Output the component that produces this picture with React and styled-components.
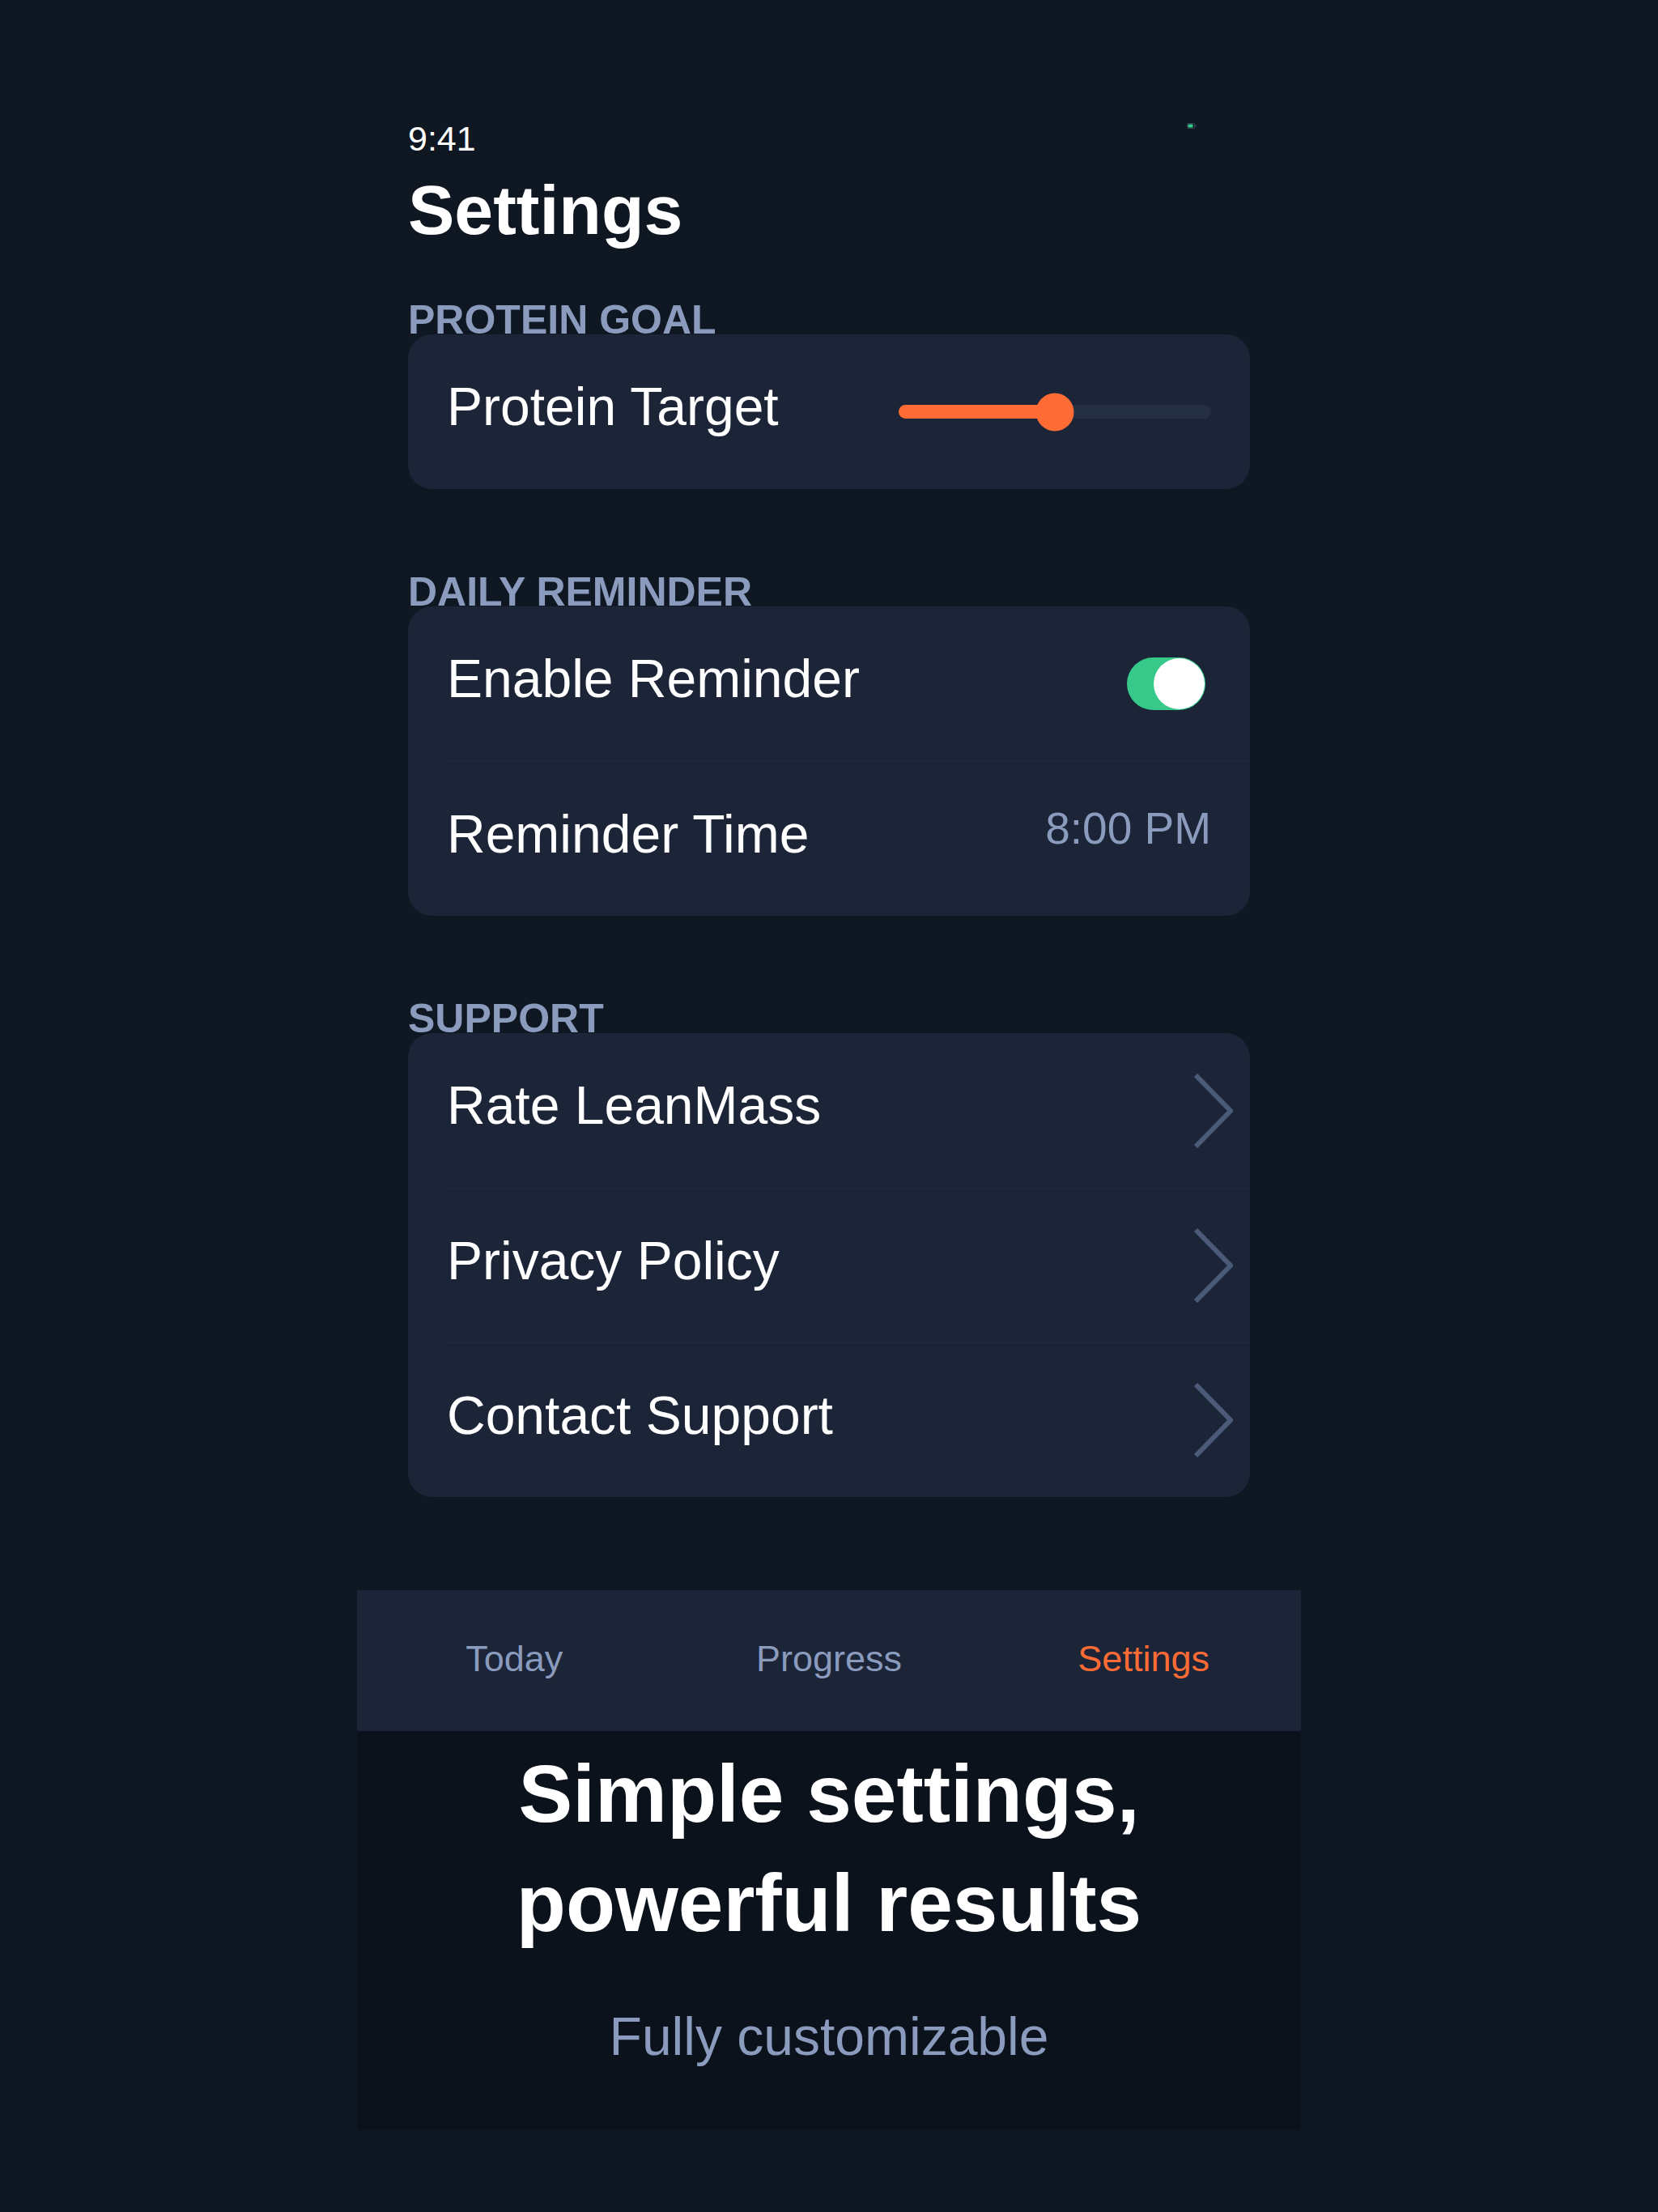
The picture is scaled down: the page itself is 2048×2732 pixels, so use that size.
import React from 'react';
import styled, {createGlobalStyle} from 'styled-components';

const GlobalStyle = createGlobalStyle`
  html, body {
    margin: 0;
    padding: 0;
    background: #0f1822;
  }
  body {
    font-family: "Liberation Sans", Arial, Helvetica, sans-serif;
    color: #ffffff;
  }
`;

const Page = styled.div`
  min-height: 2732px;
  display: flex;
  justify-content: center;
`;

const Phone = styled.div`
  width: 1166px;
  display: flex;
  flex-direction: column;
`;

const Content = styled.div`
  padding: 144px 63px 0;
  display: flex;
  flex-direction: column;
`;

const StatusBar = styled.div`
  display: flex;
  justify-content: space-between;
  height: 54px;
`;

const Time = styled.span`
  font-size: 43px;
  line-height: 54px;
  color: #ffffff;
`;

const Battery = styled.svg`
  width: 12px;
  height: 7px;
  margin: 8px 66px 0 0;
`;

const Title = styled.h1`
  margin: 11px 0 0;
  font-size: 86px;
  line-height: 100px;
  font-weight: 700;
  color: #ffffff;
`;

const SectionHeader = styled.h2`
  margin: ${p => (p.$first ? '61px' : '102px')} 0 -7px;
  font-size: 50px;
  line-height: 50px;
  font-weight: 700;
  color: #8a9bbe;
  text-transform: uppercase;
`;

const Card = styled.div`
  position: relative;
  background: #1b2537;
  border-radius: 30px;
  overflow: hidden;
`;

const Row = styled.div`
  height: 191px;
  box-sizing: border-box;
  margin-left: 48px;
  padding-right: 48px;
  display: flex;
  align-items: center;
  justify-content: space-between;

  & + & {
    border-top: 1px solid #212c3e;
  }
`;

const Label = styled.span`
  font-size: 66px;
  color: #ffffff;
  padding-bottom: 13px;
`;

const Value = styled.span`
  font-size: 55px;
  color: #8a9bbe;
  padding-bottom: 26px;
`;

const SliderTrack = styled.div`
  position: relative;
  width: 386px;
  height: 17px;
  border-radius: 9px;
  background: #252f43;
`;

const SliderFill = styled.div`
  height: 100%;
  border-radius: 9px;
  background: #ff6b35;
`;

const SliderThumb = styled.div`
  position: absolute;
  top: 50%;
  width: 47px;
  height: 47px;
  border-radius: 50%;
  background: #ff6b35;
  transform: translate(-50%, -50%);
`;

const Toggle = styled.div`
  width: 97px;
  height: 65px;
  box-sizing: border-box;
  padding: 1px;
  border-radius: 33px;
  background: ${p => (p.$on ? '#37c98a' : '#3a4558')};
  display: flex;
  justify-content: ${p => (p.$on ? 'flex-end' : 'flex-start')};
  margin-right: 7px;
`;

const Knob = styled.div`
  width: 63px;
  height: 63px;
  border-radius: 50%;
  background: #ffffff;
`;

const Chevron = styled.svg`
  width: 50px;
  height: 92px;
  margin-right: -27px;
`;

const TabBar = styled.nav`
  margin-top: 115px;
  height: 174px;
  background: #1b2537;
  display: grid;
  grid-template-columns: repeat(3, 1fr);
  align-items: center;
`;

const TabItem = styled.span`
  text-align: center;
  font-size: 45px;
  color: ${p => (p.$active ? '#ff6b35' : '#8a9bbe')};
  padding-bottom: 4px;
`;

const Promo = styled.section`
  background: #0b121c;
  padding: 10px 0 77px;
  display: flex;
  flex-direction: column;
  align-items: center;
  text-align: center;
`;

const Headline = styled.h2`
  margin: 0;
  font-size: 100px;
  line-height: 135px;
  font-weight: 700;
  color: #ffffff;
`;

const Subline = styled.p`
  margin: 59px 0 0;
  font-size: 66px;
  line-height: 77px;
  color: #8a9bbe;
`;

const ChevronIcon = () => (
  <Chevron viewBox="0 0 50 92" fill="none">
    <polyline points="4,2 47,46 4,90" stroke="#4b5a77" strokeWidth="6" />
  </Chevron>
);

const Slider = ({value}) => (
  <SliderTrack>
    <SliderFill style={{width: `${value}%`}} />
    <SliderThumb style={{left: `${value}%`}} />
  </SliderTrack>
);

const App = () => {
  const tabs = ['Today', 'Progress', 'Settings'];
  const support = ['Rate LeanMass', 'Privacy Policy', 'Contact Support'];
  return (
    <Page>
      <GlobalStyle />
      <Phone>
        <Content>
          <StatusBar>
            <Time>9:41</Time>
            <Battery viewBox="0 0 12 7">
              <rect x="0.5" y="0.5" width="9" height="6" rx="1" fill="none" stroke="#3a4656" />
              <rect x="1.5" y="1.5" width="6" height="4" fill="#37c98a" />
              <rect x="10" y="2.5" width="1.5" height="2" fill="#3a4656" />
            </Battery>
          </StatusBar>
          <Title>Settings</Title>

          <SectionHeader $first>Protein Goal</SectionHeader>
          <Card>
            <Row>
              <Label>Protein Target</Label>
              <Slider value={50} />
            </Row>
          </Card>

          <SectionHeader>Daily Reminder</SectionHeader>
          <Card>
            <Row>
              <Label>Enable Reminder</Label>
              <Toggle $on>
                <Knob />
              </Toggle>
            </Row>
            <Row>
              <Label>Reminder Time</Label>
              <Value>8:00 PM</Value>
            </Row>
          </Card>

          <SectionHeader>Support</SectionHeader>
          <Card>
            {support.map(item => (
              <Row key={item}>
                <Label>{item}</Label>
                <ChevronIcon />
              </Row>
            ))}
          </Card>
        </Content>

        <TabBar>
          {tabs.map(tab => (
            <TabItem key={tab} $active={tab === 'Settings'}>{tab}</TabItem>
          ))}
        </TabBar>

        <Promo>
          <Headline>
            Simple settings,
            <br />
            powerful results
          </Headline>
          <Subline>Fully customizable</Subline>
        </Promo>
      </Phone>
    </Page>
  );
};

export default App;
